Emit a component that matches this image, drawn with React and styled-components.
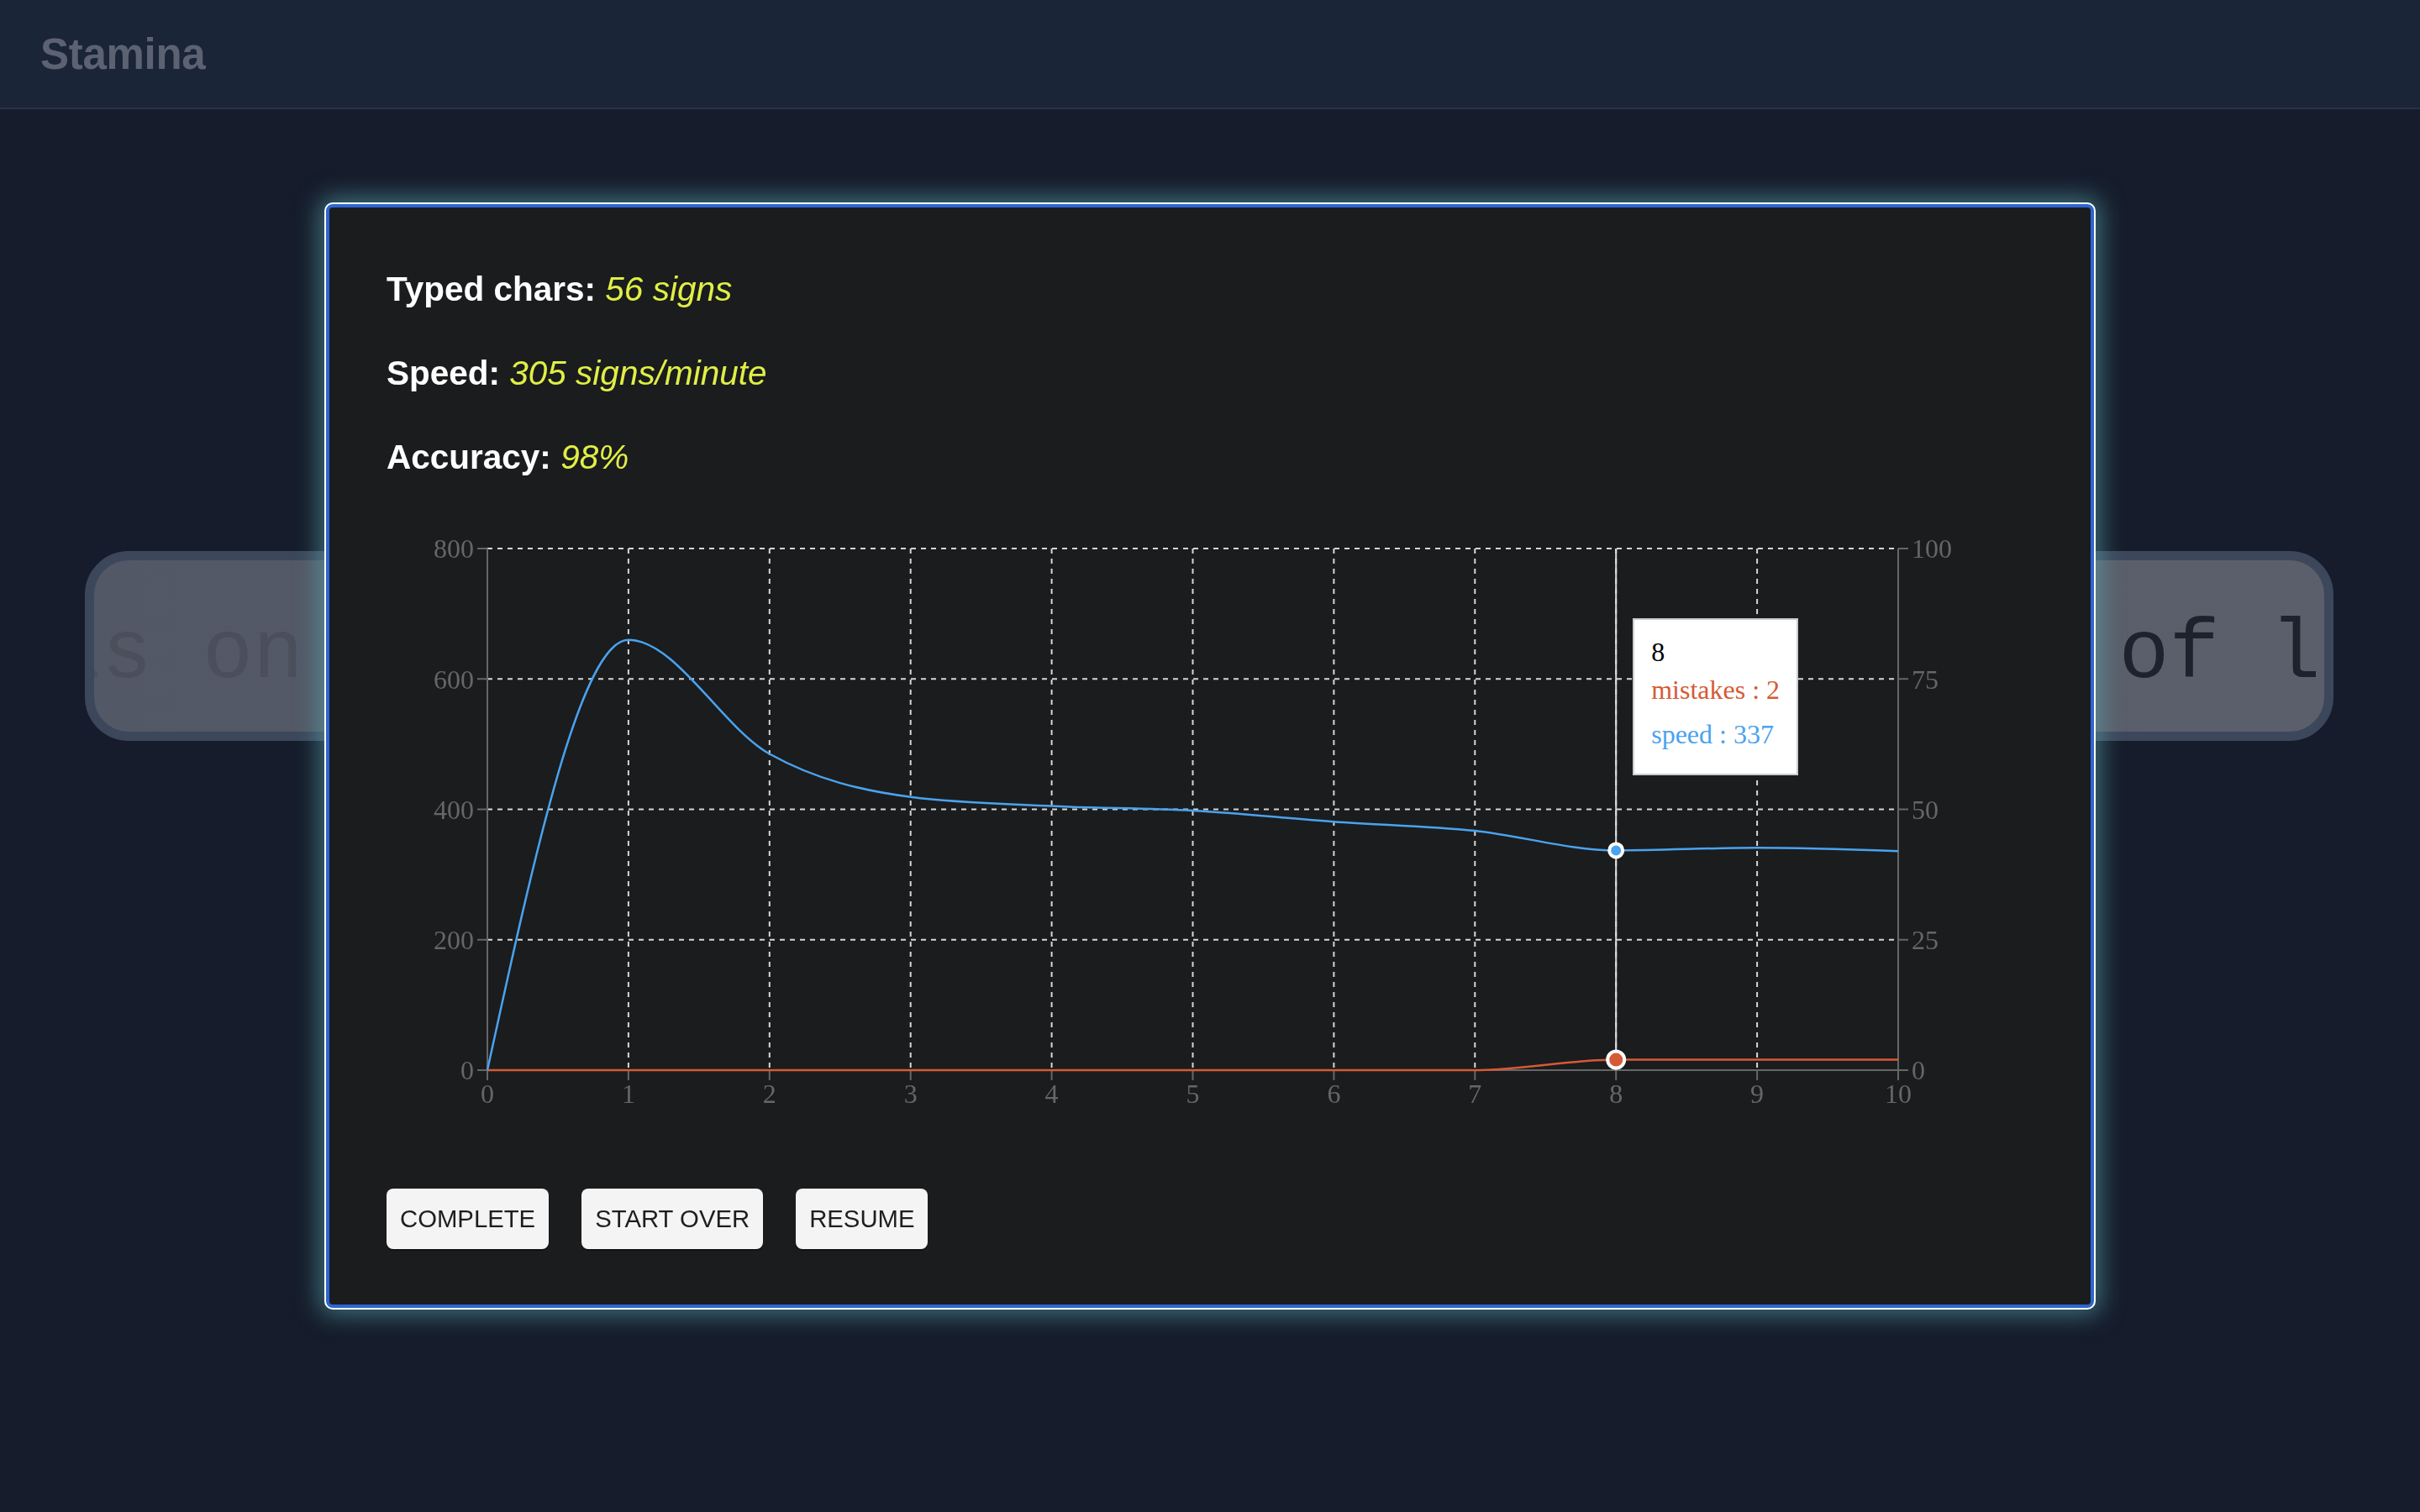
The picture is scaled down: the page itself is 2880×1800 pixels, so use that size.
import React from 'react';
import styled, { createGlobalStyle } from 'styled-components';

const GlobalStyle = createGlobalStyle`
  html, body {
    margin: 0;
    padding: 0;
    background: #161c2b;
    font-family: "Liberation Sans", Arial, sans-serif;
  }
`;

const speed = [0, 660, 485, 419, 405, 398, 381, 367, 337, 341, 336];
const mistakes = [0, 0, 0, 0, 0, 0, 0, 0, 2, 2, 2];
const active = 8;

// chart geometry (svg px)
const W = 1962;
const H = 740;
const PL = 121;
const PR = 1800;
const PT = 52;
const PB = 673;
const xAt = i => PL + ((PR - PL) * i) / 10;
const yLeft = v => PB - ((PB - PT) * v) / 800;
const yRight = v => PB - ((PB - PT) * v) / 100;

function monotonePath(pts) {
  const n = pts.length;
  const t = new Array(n).fill(0);
  const sign = v => (v < 0 ? -1 : v > 0 ? 1 : 0);
  for (let i = 1; i < n - 1; i++) {
    const [x0, y0] = pts[i - 1];
    const [x1, y1] = pts[i];
    const [x2, y2] = pts[i + 1];
    const h0 = x1 - x0;
    const h1 = x2 - x1;
    const s0 = (y1 - y0) / h0;
    const s1 = (y2 - y1) / h1;
    const p = (s0 * h1 + s1 * h0) / (h0 + h1);
    t[i] =
      (sign(s0) + sign(s1)) *
        Math.min(Math.abs(s0), Math.abs(s1), 0.5 * Math.abs(p)) || 0;
  }
  const sFirst = (pts[1][1] - pts[0][1]) / (pts[1][0] - pts[0][0]);
  t[0] = (3 * sFirst - t[1]) / 2;
  const sLast = (pts[n - 1][1] - pts[n - 2][1]) / (pts[n - 1][0] - pts[n - 2][0]);
  t[n - 1] = (3 * sLast - t[n - 2]) / 2;

  let d = `M${pts[0][0]},${pts[0][1]}`;
  for (let i = 0; i < n - 1; i++) {
    const [x0, y0] = pts[i];
    const [x1, y1] = pts[i + 1];
    const dx = (x1 - x0) / 3;
    d += `C${x0 + dx},${y0 + dx * t[i]},${x1 - dx},${y1 - dx * t[i + 1]},${x1},${y1}`;
  }
  return d;
}

const Page = styled.div`
  min-height: 100vh;
  display: flex;
  flex-direction: column;
`;

const Header = styled.header`
  height: 128px;
  display: flex;
  align-items: center;
  padding: 0 48px;
  background: #1b2538;
  border-bottom: 2px solid #283246;
`;

const Logo = styled.h1`
  margin: 0;
  font-size: 51px;
  font-weight: 700;
  color: #5c6272;
  letter-spacing: -0.3px;
`;

const Main = styled.main`
  padding: 526px 103px 0 101px;
`;

const TypingBox = styled.div`
  height: 204px;
  display: flex;
  align-items: center;
  overflow: hidden;
  border: 11px solid #3c475b;
  border-radius: 52px;
  background: linear-gradient(90deg, #525866, #5b5f6b);
`;

const TypingLine = styled.div`
  margin-left: -51px;
  margin-top: 22px;
  white-space: pre;
  font-family: "Liberation Mono", "Courier New", monospace;
  font-size: 100px;
  line-height: 1;
`;

const Chars = styled.span`
  color: ${props => (props.typed ? '#4a4f5b' : '#1f222c')};
`;

const Overlay = styled.div`
  position: fixed;
  inset: 0;
  display: flex;
  align-items: center;
  justify-content: center;
`;

const Modal = styled.div`
  box-sizing: border-box;
  width: 2104px;
  padding: 74px 67px 66px 68px;
  background: #1b1c1e;
  border: 4px solid #2d66d0;
  border-radius: 8px;
  box-shadow: 0 0 0 2px #ffffff, 0 0 28px 8px rgba(92, 178, 188, 0.55);
  display: flex;
  flex-direction: column;
`;

const Stats = styled.div`
  display: flex;
  flex-direction: column;
  gap: 54px;
`;

const Stat = styled.p`
  margin: 0;
  font-size: 40.5px;
  line-height: 46px;
  color: #ffffff;

  strong {
    font-weight: 700;
  }
  em {
    color: #e0ef45;
    font-style: italic;
  }
`;

const ChartWrap = styled.div`
  position: relative;
  margin-top: 34px;
  margin-left: -1px;
  width: ${W}px;
  height: ${H}px;

  svg {
    display: block;
  }
  text {
    font-family: "Liberation Serif", "Times New Roman", serif;
    font-size: 32px;
    fill: #666666;
  }
`;

const Tooltip = styled.div`
  position: absolute;
  top: 135px;
  padding: 20px;
  background: #ffffff;
  border: 2px solid #cccccc;
  white-space: nowrap;
  font-family: "Liberation Serif", "Times New Roman", serif;
  font-size: 32px;
`;

const TooltipLabel = styled.p`
  margin: 0;
  color: #000000;
`;

const TooltipList = styled.ul`
  margin: 0;
  padding: 0;
  list-style: none;
`;

const TooltipItem = styled.li`
  padding: 8px 0;
  color: ${props => props.color};
`;

const Actions = styled.div`
  display: flex;
  gap: 39px;
  margin-top: 74px;
`;

const Button = styled.button`
  height: 72px;
  padding: 0 16px;
  border: none;
  border-radius: 8px;
  background: #f4f4f4;
  box-shadow: 0 2px 0 rgba(0, 0, 0, 0.35);
  color: #1e1e1e;
  font-family: "Liberation Sans", Arial, sans-serif;
  font-size: 29.3px;
  cursor: pointer;
`;

function Chart() {
  const speedPts = speed.map((v, i) => [xAt(i), yLeft(v)]);
  const mistakePts = mistakes.map((v, i) => [xAt(i), yRight(v)]);
  const yTicksLeft = [0, 200, 400, 600, 800];
  const yTicksRight = [0, 25, 50, 75, 100];
  const ax = xAt(active);

  return (
    <ChartWrap>
      <svg width={W} height={H} viewBox={`0 0 ${W} ${H}`}>
        <g stroke="#d6d6d6" strokeWidth="2" strokeDasharray="6 6">
          {yTicksLeft.map(v => (
            <line key={`h${v}`} x1={PL} x2={PR} y1={yLeft(v)} y2={yLeft(v)} />
          ))}
          {speed.map((_, i) => (
            <line key={`v${i}`} x1={xAt(i)} x2={xAt(i)} y1={PT} y2={PB} />
          ))}
        </g>

        <g stroke="#666666" strokeWidth="2">
          <line x1={PL} x2={PL} y1={PT} y2={PB} />
          <line x1={PR} x2={PR} y1={PT} y2={PB} />
          <line x1={PL} x2={PR} y1={PB} y2={PB} />
          {yTicksLeft.map(v => (
            <line key={`tl${v}`} x1={PL - 12} x2={PL} y1={yLeft(v)} y2={yLeft(v)} />
          ))}
          {yTicksRight.map(v => (
            <line key={`tr${v}`} x1={PR} x2={PR + 12} y1={yRight(v)} y2={yRight(v)} />
          ))}
          {speed.map((_, i) => (
            <line key={`tb${i}`} x1={xAt(i)} x2={xAt(i)} y1={PB} y2={PB + 12} />
          ))}
        </g>

        {yTicksLeft.map(v => (
          <text key={`ll${v}`} x={PL - 16} y={yLeft(v)} dy="0.355em" textAnchor="end">
            {v}
          </text>
        ))}
        {yTicksRight.map(v => (
          <text key={`lr${v}`} x={PR + 16} y={yRight(v)} dy="0.355em" textAnchor="start">
            {v}
          </text>
        ))}
        {speed.map((_, i) => (
          <text key={`lb${i}`} x={xAt(i)} y={PB + 16} dy="0.71em" textAnchor="middle">
            {i}
          </text>
        ))}

        <line x1={ax} x2={ax} y1={PT} y2={PB} stroke="#dddddd" strokeWidth="2" />

        <path d={monotonePath(mistakePts)} fill="none" stroke="#d65a36" strokeWidth="2.5" />
        <path d={monotonePath(speedPts)} fill="none" stroke="#4aa3ef" strokeWidth="2.5" />

        <circle cx={ax} cy={yRight(mistakes[active])} r="10" fill="#d65a36" stroke="#ffffff" strokeWidth="4" />
        <circle cx={ax} cy={yLeft(speed[active])} r="8" fill="#4aa3ef" stroke="#ffffff" strokeWidth="4" />
      </svg>

      <Tooltip style={{ left: ax + 20 }}>
        <TooltipLabel>{active}</TooltipLabel>
        <TooltipList>
          <TooltipItem color="#d65a36">mistakes : {mistakes[active]}</TooltipItem>
          <TooltipItem color="#4aa3ef">speed : {speed[active]}</TooltipItem>
        </TooltipList>
      </Tooltip>
    </ChartWrap>
  );
}

export default function App() {
  return (
    <Page>
      <GlobalStyle />
      <Header>
        <Logo>Stamina</Logo>
      </Header>
      <Main>
        <TypingBox>
          <TypingLine>
            <Chars typed>ls on the planets exist in sev</Chars>
            <Chars>eral forms of large rocks</Chars>
          </TypingLine>
        </TypingBox>
      </Main>

      <Overlay>
        <Modal>
          <Stats>
            <Stat>
              <strong>Typed chars:</strong> <em>56 signs</em>
            </Stat>
            <Stat>
              <strong>Speed:</strong> <em>305 signs/minute</em>
            </Stat>
            <Stat>
              <strong>Accuracy:</strong> <em>98%</em>
            </Stat>
          </Stats>
          <Chart />
          <Actions>
            <Button>COMPLETE</Button>
            <Button>START OVER</Button>
            <Button>RESUME</Button>
          </Actions>
        </Modal>
      </Overlay>
    </Page>
  );
}
